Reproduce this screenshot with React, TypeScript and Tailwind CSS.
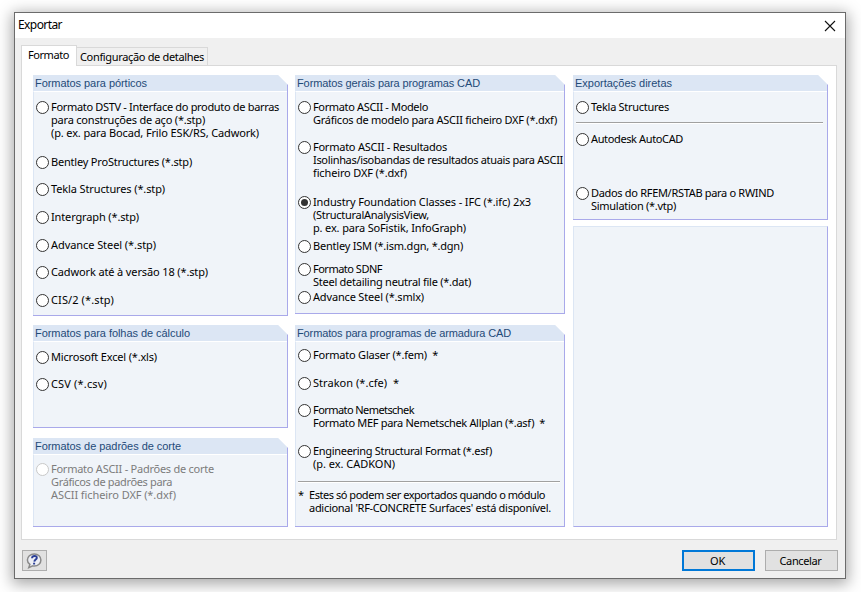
import React, { useLayoutEffect, useRef, useState } from "react";

interface LineProps {
  text: string;
  width: number;
}

// A single label line, tracked so that it fills the given width
function Line({ text, width }: LineProps) {
  const ref = useRef<HTMLSpanElement>(null);
  const [spacing, setSpacing] = useState(0);

  useLayoutEffect(() => {
    if (!ref.current) return;
    const natural = ref.current.getBoundingClientRect().width - spacing * text.length;
    setSpacing((width - natural) / text.length);
  }, [text, width]);

  return (
    <span className="block h-[13px]">
      <span ref={ref} className="block w-max leading-[11px] whitespace-pre" style={{ letterSpacing: spacing }}>
        {text}
      </span>
    </span>
  );
}

interface OptionProps {
  lines: [string, number][];
  className: string;
  checked?: boolean;
  disabled?: boolean;
}

function Option({ lines, className, checked, disabled }: OptionProps) {
  return (
    <label className={`flex gap-[2px] pl-[2px] ${disabled ? "text-[#7c7c7c]" : "text-black"} ${className}`}>
      <svg className="h-[13px] w-[13px] shrink-0" viewBox="0 0 13 13">
        <circle cx="6.5" cy="6.5" r="6" fill="#fff" stroke={disabled ? "#c8c8c8" : "#333"} />
        {checked && <circle cx="6.5" cy="6.5" r="3.5" fill="#333" />}
      </svg>
      <span>
        {lines.map(([text, width]) => (
          <Line key={text} text={text} width={width} />
        ))}
      </span>
    </label>
  );
}

interface PanelProps {
  title: string;
  titleWidth: number;
  className: string;
  children: React.ReactNode;
}

function Panel({ title, titleWidth, className, children }: PanelProps) {
  return (
    <section
      className={`flex flex-col border-r border-b border-[#a9a9ea] bg-[#f0f4f9] [clip-path:polygon(0_0,calc(100%-10px)_0,100%_10px,100%_100%,0_100%)] ${className}`}
    >
      <h2 className="h-4 shrink-0 bg-[#dce6f4] pt-[3px] pl-[2px] font-['Liberation_Sans',sans-serif] text-[#1f4a78]">
        <Line text={title} width={titleWidth} />
      </h2>
      <div className="flex-1 border-t border-l border-t-white border-l-[#dce6f4]">{children}</div>
    </section>
  );
}

function Rule({ className }: { className: string }) {
  return <div className={`ml-[2px] mr-1 h-[2px] border-t border-b border-t-[#a0a0a0] border-b-white ${className}`} />;
}

export default function App() {
  return (
    <div className="h-[592px] w-[861px] overflow-hidden bg-white pt-3 pl-[14px] font-['Noto_Sans',sans-serif] text-[11px] leading-[13px] text-black">
      <div className="flex h-[567px] w-[832px] flex-col border border-[#6b6b6b] bg-[#f0f0f0] shadow-[0_3px_14px_2px_rgba(0,0,0,0.35)]">
        {/* Title bar */}
        <header className="flex h-[25px] shrink-0 items-center justify-between bg-white pr-[9px] pl-[3px] text-[12px]">
          <Line text="Exportar" width={44} />
          <svg className="h-3 w-3" viewBox="0 0 12 12" stroke="#111" strokeWidth="1.1">
            <path d="M1 1 11 11M11 1 1 11" />
          </svg>
        </header>

        {/* Tabs */}
        <nav className="flex h-[27px] shrink-0 items-end pl-[6px]">
          <div className="relative z-10 -mb-px h-[21px] w-[56px] border border-b-0 border-[#d9d9d9] bg-white pt-[3px] pl-[6px]">
            <Line text="Formato" width={41} />
          </div>
          <div className="h-[18px] w-[131px] border border-b-0 border-l-0 border-[#d9d9d9] pt-[3px] pl-[3px]">
            <Line text="Configuração de detalhes" width={124} />
          </div>
        </nav>

        <main className="ml-[6px] flex h-[475px] w-[816px] shrink-0 border border-[#d9d9d9] bg-white pt-[9px] pl-[11px]">
          <div className="w-[255px]">
            <Panel title="Formatos para pórticos" titleWidth={112} className="h-[241px]">
              <Option
                className="mt-[9px]"
                lines={[
                  ["Formato DSTV - Interface do produto de barras", 228],
                  ["para construções de aço (*.stp)", 154],
                  ["(p. ex. para Bocad, Frilo ESK/RS, Cadwork)", 208],
                ]}
              />
              <Option className="mt-4" lines={[["Bentley ProStructures (*.stp)", 141]]} />
              <Option className="mt-[14px]" lines={[["Tekla Structures (*.stp)", 114]]} />
              <Option className="mt-[15px]" lines={[["Intergraph (*.stp)", 88]]} />
              <Option className="mt-[15px]" lines={[["Advance Steel (*.stp)", 105]]} />
              <Option className="mt-[14px]" lines={[["Cadwork até à versão 18 (*.stp)", 157]]} />
              <Option className="mt-[15px]" lines={[["CIS/2 (*.stp)", 63]]} />
            </Panel>
            <Panel title="Formatos para folhas de cálculo" titleWidth={155} className="mt-[9px] h-[103px]">
              <Option className="mt-[9px]" lines={[["Microsoft Excel (*.xls)", 106]]} />
              <Option className="mt-[14px]" lines={[["CSV (*.csv)", 56]]} />
            </Panel>
            <Panel title="Formatos de padrões de corte" titleWidth={146} className="mt-[10px] h-[89px]">
              <Option
                className="mt-2"
                disabled
                lines={[
                  ["Formato ASCII - Padrões de corte", 163],
                  ["Gráficos de padrões para", 121],
                  ["ASCII ficheiro DXF (*.dxf)", 125],
                ]}
              />
            </Panel>
          </div>

          <div className="ml-[7px] w-[270px]">
            <Panel title="Formatos gerais para programas CAD" titleWidth={183} className="h-[239px]">
              <Option
                className="mt-[9px]"
                lines={[
                  ["Formato ASCII - Modelo", 115],
                  ["Gráficos de modelo para ASCII ficheiro DXF (*.dxf)", 244],
                ]}
              />
              <Option
                className="mt-[14px]"
                lines={[
                  ["Formato ASCII - Resultados", 134],
                  ["Isolinhas/isobandas de resultados atuais para ASCII", 250],
                  ["ficheiro DXF (*.dxf)", 94],
                ]}
              />
              <Option
                className="mt-4"
                checked
                lines={[
                  ["Industry Foundation Classes - IFC (*.ifc) 2x3", 218],
                  ["(StructuralAnalysisView,", 116],
                  ["p. ex. para SoFistik, InfoGraph)", 153],
                ]}
              />
              <Option className="mt-[5px]" lines={[["Bentley ISM (*.ism.dgn, *.dgn)", 150]]} />
              <Option
                className="mt-[10px]"
                lines={[
                  ["Formato SDNF", 69],
                  ["Steel detailing neutral file (*.dat)", 158],
                ]}
              />
              <Option className="mt-[2px]" lines={[["Advance Steel (*.smlx)", 111]]} />
            </Panel>
            <Panel title="Formatos para programas de armadura CAD" titleWidth={214} className="mt-[11px] h-[202px]">
              <Option className="mt-[7px]" lines={[["Formato Glaser (*.fem)  *", 125]]} />
              <Option className="mt-[15px]" lines={[["Strakon (*.cfe)  *", 86]]} />
              <Option
                className="mt-[14px]"
                lines={[
                  ["Formato Nemetschek", 101],
                  ["Formato MEF para Nemetschek Allplan (*.asf)  *", 232],
                ]}
              />
              <Option
                className="mt-[15px]"
                lines={[
                  ["Engineering Structural Format (*.esf)", 179],
                  ["(p. ex. CADKON)", 82],
                ]}
              />
              <Rule className="mt-[10px]" />
              <div className="mt-[6px] flex pl-[2px]">
                <div className="w-[11px]">
                  <Line text="*" width={6} />
                </div>
                <div>
                  <Line text="Estes só podem ser exportados quando o módulo" width={236} />
                  <Line text="adicional 'RF-CONCRETE Surfaces' está disponível." width={242} />
                </div>
              </div>
            </Panel>
          </div>

          <div className="ml-2 w-[255px]">
            <Panel title="Exportações diretas" titleWidth={97} className="h-[145px]">
              <Option className="mt-[9px]" lines={[["Tekla Structures", 78]]} />
              <Rule className="mt-2" />
              <Option className="mt-[9px]" lines={[["Autodesk AutoCAD", 92]]} />
              <Option
                className="mt-[41px]"
                lines={[
                  ["Dados do RFEM/RSTAB para o RWIND", 183],
                  ["Simulation (*.vtp)", 85],
                ]}
              />
            </Panel>
            <div className="mt-[6px] h-[301px] border border-t-[#dce6f4] border-r-[#a9a9ea] border-b-[#a9a9ea] border-l-[#dce6f4] bg-[#f0f4f9]" />
          </div>
        </main>

        {/* Buttons */}
        <footer className="flex items-center pt-[10px] pl-[7px]">
          <button className="flex h-[21px] w-[25px] items-center justify-center border border-[#adadad] bg-[#e1e1e1]">
            <svg className="mr-px h-4 w-4" viewBox="0 0 16 16">
              <path
                d="M8.3 1C4.3 1 1.4 3.8 1.4 7c0 1.700 1 3.300 2.500 4.400L2.800 14.600l4-1.700c.5.1 1 .1 1.500.1 3.900 0 6.600-2.700 6.600-6S12.200 1 8.300 1z"
                fill="#eceef5"
                stroke="#8a8a8a"
                strokeWidth="1.500"
              />
              <path d="M6 5.200c.1-1.500 1.100-2.200 2.600-2.200 1.500 0 2.400.8 2.200 2-.2 1.500-2.200 1.700-2.500 3.600" fill="none" stroke="#2b3f96" strokeWidth="1.900" />
              <path d="M7.100 9.700h2v1.800h-2z" fill="#2b3f96" />
            </svg>
          </button>
          <button className="ml-[635px] flex h-[21px] w-[73px] items-center justify-center border-2 border-[#0078d7] bg-[#e1e1e1] pt-px pr-[2px]">
            <Line text="OK" width={15} />
          </button>
          <button className="ml-[10px] flex h-[21px] w-[73px] items-center justify-center border border-[#adadad] bg-[#e1e1e1] pt-px pr-[2px]">
            <Line text="Cancelar" width={42} />
          </button>
        </footer>
      </div>
    </div>
  );
}
